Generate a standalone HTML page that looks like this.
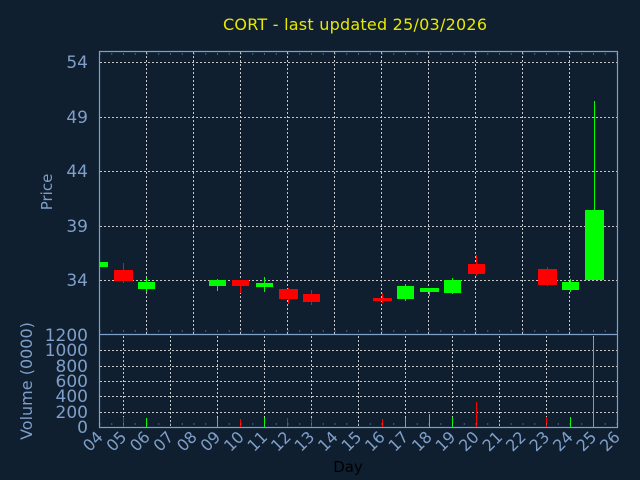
<!DOCTYPE html>
<html><head><meta charset="utf-8"><style>
html,body{margin:0;padding:0;background:#0f1f30;width:640px;height:480px;overflow:hidden}
svg{display:block}
text{font-family:"DejaVu Sans","Liberation Sans",sans-serif}
</style></head><body>
<svg width="640" height="480" viewBox="0 0 640 480">
<rect width="640" height="480" fill="#0f1f30"/>
<text x="355" y="30" fill="#e8e800" font-size="16" text-anchor="middle" textLength="264">CORT - last updated 25/03/2026</text>
<!-- price grid -->
<g stroke="#c8c8c8" stroke-width="1" stroke-dasharray="2 2" fill="none">
<line x1="100" y1="62.5" x2="617" y2="62.5"/>
<line x1="100" y1="117.5" x2="617" y2="117.5"/>
<line x1="100" y1="171.5" x2="617" y2="171.5"/>
<line x1="100" y1="226.5" x2="617" y2="226.5"/>
<line x1="100" y1="280.5" x2="617" y2="280.5"/>
<line x1="146.5" y1="52" x2="146.5" y2="334"/><line x1="193.5" y1="52" x2="193.5" y2="334"/>
<line x1="240.5" y1="52" x2="240.5" y2="334"/><line x1="287.5" y1="52" x2="287.5" y2="334"/>
<line x1="334.5" y1="52" x2="334.5" y2="334"/><line x1="381.5" y1="52" x2="381.5" y2="334"/>
<line x1="428.5" y1="52" x2="428.5" y2="334"/><line x1="475.5" y1="52" x2="475.5" y2="334"/>
<line x1="522.5" y1="52" x2="522.5" y2="334"/><line x1="569.5" y1="52" x2="569.5" y2="334"/>
<!-- volume grid -->
<line x1="100" y1="350.5" x2="617" y2="350.5"/><line x1="100" y1="366.5" x2="617" y2="366.5"/>
<line x1="100" y1="381.5" x2="617" y2="381.5"/><line x1="100" y1="396.5" x2="617" y2="396.5"/>
<line x1="100" y1="412.5" x2="617" y2="412.5"/>
<line x1="123.5" y1="336" x2="123.5" y2="427"/><line x1="170.5" y1="336" x2="170.5" y2="427"/>
<line x1="217.5" y1="336" x2="217.5" y2="427"/><line x1="264.5" y1="336" x2="264.5" y2="427"/>
<line x1="311.5" y1="336" x2="311.5" y2="427"/><line x1="358.5" y1="336" x2="358.5" y2="427"/>
<line x1="405.5" y1="336" x2="405.5" y2="427"/><line x1="452.5" y1="336" x2="452.5" y2="427"/>
<line x1="499.5" y1="336" x2="499.5" y2="427"/><line x1="546.5" y1="336" x2="546.5" y2="427"/>
<line x1="593.5" y1="336" x2="593.5" y2="427"/>
</g>
<!-- candles -->
<g stroke-width="1">
<rect x="100" y="262" width="8" height="5" fill="#00ff00"/>
<line x1="123.5" y1="263" x2="123.5" y2="283" stroke="#ff0000"/><rect x="114" y="270" width="19" height="11" fill="#ff0000"/>
<line x1="146.5" y1="278" x2="146.5" y2="292" stroke="#00ff00"/><rect x="138" y="282" width="17" height="7" fill="#00ff00"/>
<line x1="217.5" y1="279" x2="217.5" y2="291" stroke="#00ff00"/><rect x="209" y="280" width="17" height="6" fill="#00ff00"/>
<line x1="240.5" y1="280" x2="240.5" y2="293" stroke="#ff0000"/><rect x="232" y="280" width="17" height="6" fill="#ff0000"/>
<line x1="264.5" y1="277" x2="264.5" y2="292" stroke="#00ff00"/><rect x="256" y="283" width="17" height="4" fill="#00ff00"/>
<line x1="288.5" y1="288" x2="288.5" y2="304" stroke="#ff0000"/><rect x="279" y="289" width="19" height="10" fill="#ff0000"/>
<line x1="311.5" y1="290" x2="311.5" y2="305" stroke="#ff0000"/><rect x="303" y="294" width="17" height="8" fill="#ff0000"/>
<line x1="382.5" y1="293" x2="382.5" y2="303" stroke="#ff0000"/><rect x="373" y="298" width="19" height="3" fill="#ff0000"/>
<line x1="405.5" y1="284" x2="405.5" y2="301" stroke="#00ff00"/><rect x="397" y="286" width="17" height="13" fill="#00ff00"/>
<line x1="429.5" y1="288" x2="429.5" y2="296" stroke="#00ff00"/><rect x="420" y="288" width="19" height="4" fill="#00ff00"/>
<line x1="452.5" y1="278" x2="452.5" y2="294" stroke="#00ff00"/><rect x="444" y="280" width="17" height="13" fill="#00ff00"/>
<line x1="476.5" y1="255" x2="476.5" y2="276" stroke="#ff0000"/><rect x="468" y="264" width="17" height="10" fill="#ff0000"/>
<line x1="547.5" y1="267" x2="547.5" y2="286" stroke="#ff0000"/><rect x="538" y="269" width="19" height="16" fill="#ff0000"/>
<line x1="570.5" y1="279" x2="570.5" y2="292" stroke="#00ff00"/><rect x="562" y="282" width="17" height="8" fill="#00ff00"/>
<line x1="594.5" y1="101" x2="594.5" y2="280" stroke="#00ff00"/><rect x="585" y="210" width="19" height="70" fill="#00ff00"/>
</g>
<!-- volume bars -->
<g stroke-width="1">
<line x1="123.5" y1="417" x2="123.5" y2="427" stroke="#ff0000"/>
<line x1="146.5" y1="418" x2="146.5" y2="427" stroke="#00ff00"/>
<line x1="217.5" y1="418" x2="217.5" y2="427" stroke="#00ff00"/>
<line x1="240.5" y1="419" x2="240.5" y2="427" stroke="#ff0000"/>
<line x1="264.5" y1="418" x2="264.5" y2="427" stroke="#00ff00"/>
<line x1="287.5" y1="418" x2="287.5" y2="427" stroke="#ff0000"/>
<line x1="311.5" y1="418" x2="311.5" y2="427" stroke="#ff0000"/>
<line x1="382.5" y1="419" x2="382.5" y2="427" stroke="#ff0000"/>
<line x1="405.5" y1="418" x2="405.5" y2="427" stroke="#00ff00"/>
<line x1="429.5" y1="414" x2="429.5" y2="427" stroke="#00ff00"/>
<line x1="452.5" y1="417" x2="452.5" y2="427" stroke="#00ff00"/>
<line x1="476.5" y1="402" x2="476.5" y2="427" stroke="#ff0000"/>
<line x1="546.5" y1="417" x2="546.5" y2="427" stroke="#ff0000"/>
<line x1="570.5" y1="417" x2="570.5" y2="427" stroke="#00ff00"/>
<line x1="593.5" y1="337" x2="593.5" y2="427" stroke="#00ff00"/>
</g>
<!-- axes -->
<g stroke="#7f9fc8" stroke-width="1.2" fill="none">
<rect x="99.5" y="51.5" width="518" height="376"/>
<line x1="99.5" y1="334.5" x2="617.5" y2="334.5"/>
</g>
<g stroke="#7f9fc8" stroke-width="1">
<line x1="99.5" y1="54" x2="617" y2="54" stroke-dasharray="1 10.75"/>
<line x1="99.5" y1="331" x2="617" y2="331" stroke-dasharray="1 10.75"/>
<line x1="99.5" y1="424" x2="617" y2="424" stroke-dasharray="1 10.75"/>
</g>
<!-- labels -->
<g fill="#7f9fc8" font-size="17" text-anchor="end">
<text x="88" y="68">54</text><text x="88" y="123">49</text><text x="88" y="177">44</text>
<text x="88" y="232">39</text><text x="88" y="286">34</text>
<text x="88" y="341">1200</text><text x="88" y="356">1000</text><text x="88" y="372">800</text>
<text x="88" y="387">600</text><text x="88" y="402">400</text><text x="88" y="418">200</text>
<text x="88" y="433">0</text>
</g>
<text transform="translate(52,192) rotate(-90)" fill="#7f9fc8" font-size="15" text-anchor="middle">Price</text>
<text transform="translate(32,381) rotate(-90)" fill="#7f9fc8" font-size="16" text-anchor="middle">Volume (0000)</text>
<g fill="#7f9fc8" font-size="16" text-anchor="end">
<text transform="translate(104,438) rotate(-45)">04</text>
<text transform="translate(127.5,438) rotate(-45)">05</text>
<text transform="translate(151,438) rotate(-45)">06</text>
<text transform="translate(174.5,438) rotate(-45)">07</text>
<text transform="translate(198,438) rotate(-45)">08</text>
<text transform="translate(221.5,438) rotate(-45)">09</text>
<text transform="translate(245,438) rotate(-45)">10</text>
<text transform="translate(268.5,438) rotate(-45)">11</text>
<text transform="translate(292,438) rotate(-45)">12</text>
<text transform="translate(315.5,438) rotate(-45)">13</text>
<text transform="translate(339,438) rotate(-45)">14</text>
<text transform="translate(362.5,438) rotate(-45)">15</text>
<text transform="translate(386,438) rotate(-45)">16</text>
<text transform="translate(409.5,438) rotate(-45)">17</text>
<text transform="translate(433,438) rotate(-45)">18</text>
<text transform="translate(456.5,438) rotate(-45)">19</text>
<text transform="translate(480,438) rotate(-45)">20</text>
<text transform="translate(503.5,438) rotate(-45)">21</text>
<text transform="translate(527,438) rotate(-45)">22</text>
<text transform="translate(550.5,438) rotate(-45)">23</text>
<text transform="translate(574,438) rotate(-45)">24</text>
<text transform="translate(597.5,438) rotate(-45)">25</text>
<text transform="translate(621,438) rotate(-45)">26</text>
</g>
<text x="348" y="472" fill="#000000" font-size="15" text-anchor="middle">Day</text>
</svg>
</body></html>
